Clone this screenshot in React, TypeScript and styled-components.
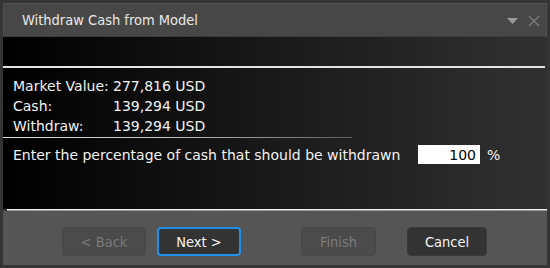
import React from "react";
import styled, { createGlobalStyle } from "styled-components";

const GlobalStyle = createGlobalStyle`
  html, body {
    margin: 0;
    padding: 0;
    background: #2b2b2b;
  }
  * {
    box-sizing: border-box;
  }
`;

const titleFont = `"DejaVu Sans Condensed", "DejaVu Sans", Tahoma, sans-serif`;
const font = `"DejaVu Sans", Tahoma, Verdana, sans-serif`;

const App = () => {
  const rows = [
    { label: "Market Value:", value: "277,816 USD" },
    { label: "Cash:", value: "139,294 USD" },
    { label: "Withdraw:", value: "139,294 USD" },
  ];
  return (
    <>
      <GlobalStyle />
      <Window>
        <TitleBar>
          <Title>Withdraw Cash from Model</Title>
          <TitleTools>
            <svg width="11" height="6" viewBox="0 0 11 6">
              <path d="M0 0 H11 L5.5 6 Z" fill="#9a9a9a" />
            </svg>
            <svg width="12" height="12" viewBox="0 0 12 12">
              <path
                d="M1 1 L11 11 M11 1 L1 11"
                stroke="#7c7c7c"
                strokeWidth="1.3"
                fill="none"
              />
            </svg>
          </TitleTools>
        </TitleBar>
        <Body>
          <TopBand />
          <Rule />
          <InfoTable>
            {rows.map((r) => (
              <InfoRow key={r.label}>
                <Label>{r.label}</Label>
                <Value>{r.value}</Value>
              </InfoRow>
            ))}
          </InfoTable>
          <ShortRule />
          <PromptRow>
            <Prompt>Enter the percentage of cash that should be withdrawn</Prompt>
            <PercentInput defaultValue="100" />
            <Unit>%</Unit>
          </PromptRow>
        </Body>
        <BottomRule />
        <Footer>
          <Button disabled>&lt; Back</Button>
          <Button $primary $gap={11}>
            Next &gt;
          </Button>
          <Button disabled $gap={60} $w={75}>
            Finish
          </Button>
          <Button $gap={31} $w={80}>
            Cancel
          </Button>
        </Footer>
      </Window>
    </>
  );
};

export default App;

const Window = styled.div`
  width: 550px;
  height: 268px;
  display: flex;
  flex-direction: column;
  background: #3a3a3a;
  border: 3px solid #353535;
  font-family: ${font};
  overflow: hidden;
`;

const TitleBar = styled.div`
  height: 34px;
  flex: none;
  display: flex;
  align-items: center;
  justify-content: space-between;
  background: #474747;
  border: 1px solid #515151;
  border-bottom: 1px solid #3c3c3c;
  padding: 0 6px 0 18px;
`;

const Title = styled.div`
  font-family: ${titleFont};
  font-size: 14.5px;
  color: #e8e8e8;
`;

const TitleTools = styled.div`
  display: flex;
  align-items: center;
  gap: 10px;
  padding-top: 1px;
`;

const Body = styled.div`
  flex: 1;
  display: flex;
  flex-direction: column;
  background: linear-gradient(to right, #000 0%, #171717 45%, #313131 100%);
`;

const TopBand = styled.div`
  height: 29px;
`;

const Rule = styled.div`
  height: 2px;
  margin-right: 2px;
  background: #e4e4e4;
`;

const InfoTable = styled.div`
  display: flex;
  flex-direction: column;
  padding: 8px 0 0 10px;
`;

const InfoRow = styled.div`
  display: flex;
  height: 20px;
  align-items: center;
  font-size: 14px;
  color: #f2f2f2;
`;

const Label = styled.div`
  width: 100px;
`;

const Value = styled.div``;

const ShortRule = styled.div`
  height: 1px;
  width: 349px;
  margin-top: 1px;
  background: linear-gradient(to right, #e0e0e0 0%, #c0c0c0 50%, #5a5a5a 100%);
`;

const PromptRow = styled.div`
  display: flex;
  align-items: center;
  padding: 7px 0 0 10px;
  font-size: 14px;
  color: #f2f2f2;
`;

const Prompt = styled.div`
  width: 405px;
  white-space: nowrap;
`;

const PercentInput = styled.input`
  width: 62px;
  height: 19px;
  border: none;
  outline: none;
  background: #fff;
  color: #000;
  text-align: right;
  padding: 0 4px 0 0;
  font-family: ${font};
  font-size: 14px;
`;

const Unit = styled.div`
  margin-left: 7px;
`;

const BottomRule = styled.div`
  height: 2px;
  flex: none;
  margin-left: 4px;
  background: linear-gradient(to bottom, #f0f0f0 50%, #9a9a9a 50%);
`;

const Footer = styled.div`
  height: 54px;
  flex: none;
  display: flex;
  align-items: flex-start;
  padding: 16px 0 0 59px;
  background: #555555;
`;

const Button = styled.button<{ $primary?: boolean; $gap?: number; $w?: number }>`
  width: ${(p) => p.$w ?? 84}px;
  height: 29px;
  margin-left: ${(p) => p.$gap ?? 0}px;
  border-radius: 4px;
  font-family: ${titleFont};
  font-size: 14.5px;
  padding: 0;
  color: ${(p) => (p.disabled ? "#7a7a7a" : "#f4f4f4")};
  background: ${(p) => (p.disabled ? "#4b4b4b" : "#333333")};
  border: ${(p) =>
    p.$primary ? "2px solid #1e8fe8" : p.disabled ? "1px solid #474747" : "1px solid #3a3a3a"};
`;
